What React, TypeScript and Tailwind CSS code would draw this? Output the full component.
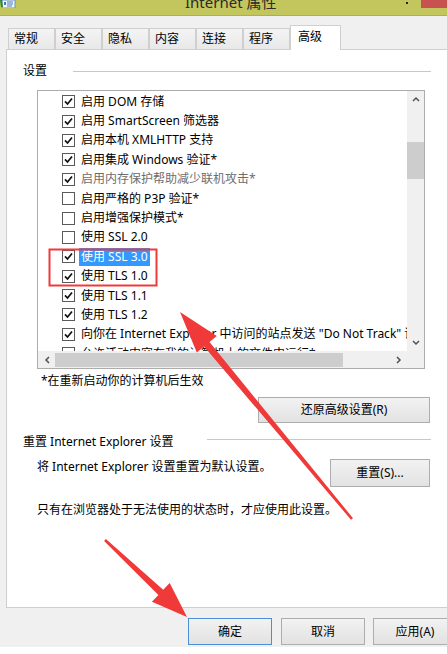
import React from 'react';

// --- Data ---
const TABS = ['常规', '安全', '隐私', '内容', '连接', '程序'];

type Row = { label: string; checked: boolean; disabled?: boolean; selected?: boolean };

const ROWS: Row[] = [
  { label: '启用 DOM 存储', checked: true },
  { label: '启用 SmartScreen 筛选器', checked: true },
  { label: '启用本机 XMLHTTP 支持', checked: true },
  { label: '启用集成 Windows 验证*', checked: true },
  { label: '启用内存保护帮助减少联机攻击*', checked: true, disabled: true },
  { label: '启用严格的 P3P 验证*', checked: false },
  { label: '启用增强保护模式*', checked: false },
  { label: '使用 SSL 2.0', checked: false },
  { label: '使用 SSL 3.0', checked: true, selected: true },
  { label: '使用 TLS 1.0', checked: true },
  { label: '使用 TLS 1.1', checked: true },
  { label: '使用 TLS 1.2', checked: true },
  { label: '向你在 Internet Explorer 中访问的站点发送 "Do Not Track" 请求', checked: true },
  { label: '允许活动内容在我的计算机上的文件中运行*', checked: false },
];

// arrow outline: thin shaft from tail, triangular head at tip
function arrowPoints(tx: number, ty: number, hx: number, hy: number, len: number, half: number, w0: number, w1: number) {
  const dx = hx - tx, dy = hy - ty;
  const L = Math.hypot(dx, dy);
  const ux = dx / L, uy = dy / L;
  const px = -uy, py = ux;
  const bx = hx - ux * len, by = hy - uy * len;
  return [
    [tx + px * w0 / 2, ty + py * w0 / 2],
    [bx + px * w1 / 2, by + py * w1 / 2],
    [bx + px * half, by + py * half],
    [hx, hy],
    [bx - px * half, by - py * half],
    [bx - px * w1 / 2, by - py * w1 / 2],
    [tx - px * w0 / 2, ty - py * w0 / 2],
  ].map(p => p.map(n => n.toFixed(1)).join(',')).join(' ');
}

function Check({ checked }: { checked: boolean }) {
  return (
    <span className="flex h-[13px] w-[13px] shrink-0 items-center justify-center border border-[#5a5a5a] bg-white">
      {checked && (
        <svg width="9" height="9" viewBox="0 0 9 9">
          <path d="M1 4.4 L3.5 7 L8 1.5" fill="none" stroke="#111" strokeWidth="1.7" />
        </svg>
      )}
    </span>
  );
}

function Chevron({ dir }: { dir: 'up' | 'down' | 'left' | 'right' }) {
  const d = {
    up: 'M1 5 L4 2 L7 5',
    down: 'M1 2 L4 5 L7 2',
    left: 'M5 1 L2 4 L5 7',
    right: 'M2 1 L5 4 L2 7',
  }[dir];
  return (
    <svg width="8" height="8" viewBox="0 0 8 8">
      <path d={d} fill="none" stroke="#505050" strokeWidth="1.5" />
    </svg>
  );
}

function WinButton({ children, className = '' }: { children: React.ReactNode; className?: string }) {
  return (
    <div className={`flex items-center justify-center border bg-linear-to-b from-[#f2f2f2] to-[#e2e2e2] text-[12px] text-black ${className}`}>
      {children}
    </div>
  );
}

export default function App() {
  return (
    <div className="relative flex h-[654px] w-[447px] flex-col overflow-hidden bg-[#f0f0f0] font-['Noto_Sans','Noto_Sans_CJK_SC',sans-serif] text-[12px] leading-[16px] text-black">
      {/* Title bar */}
      <div className="flex h-[16px] shrink-0 items-start overflow-hidden border-b border-[#aeb14a] bg-[#c3c65c]">
        <svg width="16" height="8" viewBox="0 0 16 8" className="shrink-0">
          <rect x="2" y="0" width="13" height="8" fill="#f4f8fb" stroke="#6a8fb8" strokeWidth="1" />
          <path d="M0 0 L2 0 L3 7 L1 7 Z" fill="#2d8a3c" />
          <path d="M7 2 H13 M7 4 H13 M7 6 H12" stroke="#3b78c4" strokeWidth="1" />
          <rect x="4" y="2" width="2" height="3" fill="#3b78c4" />
        </svg>
        <span className="ml-[169px] mt-[-8px] w-[120px] shrink-0 whitespace-nowrap text-[15px] leading-[20px] text-[#2a2a2a]">Internet 属性</span>
        <span className="ml-[101px] mt-[2px] h-[2px] w-[2px] shrink-0 bg-[#222]" />
        <span className="ml-[13px] h-[8px] w-[26px] shrink-0 bg-[#c75250]" />
      </div>

      {/* Tabs */}
      <div className="mt-[9px] flex h-[24px] shrink-0 items-end pl-[8px]">
        {TABS.map(t => (
          <div
            key={t}
            className="flex h-[21px] w-[47px] items-center border-x border-t border-[#cfcfcf] bg-linear-to-b from-[#f4f4f4] to-[#e8e8e8] pl-[5px]"
          >
            {t}
          </div>
        ))}
        <div className="relative z-10 -mb-px flex h-[25px] w-[51px] items-center border-x border-t border-[#cfcfcf] bg-white pb-[2px] pl-[7px]">
          高级
        </div>
      </div>

      {/* Tab panel */}
      <div className="ml-[6px] h-[559px] w-[460px] shrink-0 border border-[#cfcfcf] bg-white">
        <div className="flex w-[424px] flex-col pl-[16px] pt-[13px]">
          {/* Settings group label */}
          <div className="flex h-[16px] items-start">
            <span>设置</span>
            <span className="ml-[26px] mt-[8px] h-px w-[358px] bg-[#c8c8c8]" />
          </div>

          {/* List box */}
          <div className="ml-[14px] mt-[11px] flex h-[279px] w-[388px] flex-col border border-[#acacac] bg-white">
            <div className="flex h-[260px]">
              <div className="w-[369px] overflow-hidden pt-px">
                {ROWS.map(r => (
                  <div key={r.label} className="flex h-[19.4px] items-center whitespace-nowrap pl-[24px]">
                    <Check checked={r.checked} />
                    {r.selected ? (
                      <span className="ml-[4px] flex h-[18px] items-center bg-[#3399ff] px-[2px] text-white">{r.label}</span>
                    ) : (
                      <span className={`ml-[6px] ${r.disabled ? 'text-[#6d6d6d]' : ''}`}>{r.label}</span>
                    )}
                  </div>
                ))}
              </div>
              <div className="flex w-[17px] flex-col bg-[#f0f0f0]">
                <div className="flex h-[17px] items-center justify-center pt-px">
                  <Chevron dir="up" />
                </div>
                <div className="mt-[34px] h-[37px] bg-[#cdcdcd]" />
                <div className="flex-1" />
                <div className="flex h-[17px] items-center justify-center">
                  <Chevron dir="down" />
                </div>
              </div>
            </div>
            <div className="flex h-[17px] bg-[#f0f0f0]">
              <div className="flex w-[17px] items-center justify-center pl-[2px]">
                <Chevron dir="left" />
              </div>
              <div className="mt-[2px] h-[14px] w-[288px] bg-[#cdcdcd]" />
              <div className="flex-1" />
              <div className="flex w-[17px] items-center justify-center">
                <Chevron dir="right" />
              </div>
              <div className="w-[17px]" />
            </div>
          </div>

          <div className="ml-[18px] mt-[4px]">*在重新启动你的计算机后生效</div>

          <WinButton className="mr-px mt-[8px] h-[26px] w-[172px] self-end border-[#adadad]">还原高级设置(R)</WinButton>

          {/* Reset group */}
          <div className="mt-[11px] flex h-[16px] items-start">
            <span>重置 Internet Explorer 设置</span>
            <span className="ml-auto mt-[5px] h-px w-[224px] bg-[#c8c8c8]" />
          </div>
          <div className="ml-[14px] mt-[9px] flex items-start justify-between">
            <span>将 Internet Explorer 设置重置为默认设置。</span>
            <WinButton className="mr-px h-[28px] w-[100px] border-[#adadad]">重置(S)...</WinButton>
          </div>
          <div className="ml-[14px] mt-[15px]">只有在浏览器处于无法使用的状态时，才应使用此设置。</div>
        </div>
      </div>

      {/* Dialog buttons */}
      <div className="mt-[10px] flex h-[27px] shrink-0 pl-[188px]">
        <WinButton className="h-full w-[84px] shrink-0 border-[#4a8fd8]">确定</WinButton>
        <WinButton className="ml-[9px] h-full w-[84px] shrink-0 border-[#adadad]">取消</WinButton>
        <WinButton className="ml-[8px] h-full w-[84px] shrink-0 border-[#adadad]">应用(A)</WinButton>
      </div>
      <div className="mt-[2px] flex-1 bg-white" />

      {/* Annotations */}
      <svg className="pointer-events-none absolute inset-0" width="447" height="654" viewBox="0 0 447 654">
        <rect x="49.5" y="249.5" width="107" height="36" fill="none" stroke="#f03a3a" strokeWidth="2" />
        <polygon points={arrowPoints(352, 519, 180, 312, 42, 13, 2.5, 7)} fill="#f03a3a" />
        <polygon points={arrowPoints(105, 540, 187, 617, 36, 13, 2.5, 7)} fill="#f03a3a" />
      </svg>
    </div>
  );
}
